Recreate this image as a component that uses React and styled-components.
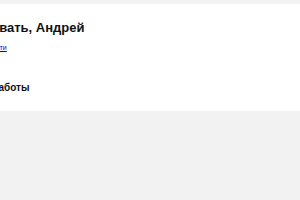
import React from "react";
import styled, { createGlobalStyle } from "styled-components";

const Global = createGlobalStyle`
  *, *::before, *::after { box-sizing: border-box; }
  html, body { margin: 0; padding: 0; background: #f2f2f2; }
  body { font-family: "Liberation Sans", Arial, sans-serif; overflow: hidden; }
`;

const Page = styled.div`
  display: flex;
  justify-content: center;
  padding-top: 4px;
  overflow: hidden;
`;

const Card = styled.section`
  flex: 0 0 auto;
  width: 508px;
  background: #ffffff;
  padding: 16px 10px 17px;
  display: flex;
  flex-direction: column;
  align-items: flex-start;
`;

const Title = styled.h1`
  margin: 0;
  font-size: 13px;
  line-height: 16px;
  font-weight: 700;
  color: #111;
`;

const Link = styled.a`
  margin-top: 7px;
  font-size: 7px;
  line-height: 9px;
  color: #0000ee;
`;

const Section = styled.h2`
  margin: 30px 0 0;
  font-size: 10px;
  line-height: 12px;
  font-weight: 700;
  color: #111;
`;

export default function App() {
  return (
    <>
      <Global />
      <Page>
        <Card>
          <Title>Добро пожаловать, Андрей</Title>
          <Link href="#">Настроить профиль или выйти</Link>
          <Section>Ваши последние работы</Section>
        </Card>
      </Page>
    </>
  );
}
